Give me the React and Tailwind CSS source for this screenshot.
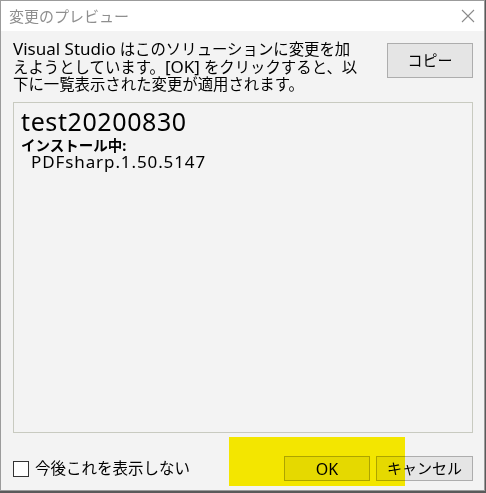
import React from "react";

const jp = { fontFamily: '"Noto Sans", "Noto Sans CJK JP", sans-serif' };

function L({ children }) {
  return <span className="text-[17px]">{children}</span>;
}

export default function App() {
  return (
    <div className="relative w-[486px] h-[493px] bg-[#5a5a5a] overflow-hidden" style={jp}>
      <div className="w-[485px] h-[491px] border border-[#9b9b9b] bg-[#f3f3f3] flex flex-col">
        {/* title bar */}
        <div className="h-[30px] bg-white flex items-center justify-between pl-[8px] pr-[8px] shrink-0">
          <span className="text-[15px] text-[#8f8f8f] leading-none">変更のプレビュー</span>
          <svg width="14" height="14" viewBox="0 0 14 14" className="mr-[1px]">
            <path d="M1 1 L13 13 M13 1 L1 13" stroke="#8a8a8a" strokeWidth="1.1" />
          </svg>
        </div>
        {/* description + copy */}
        <div className="flex justify-between pl-[12px] pr-[11px] pt-[9px] h-[71px] shrink-0">
          <p className="text-[15.4px] leading-[17px] text-black">
            <L>Visual Studio</L> はこのソリューションに変更を加
            <br />
            えようとしています。<L>[OK]</L> をクリックすると、以
            <br />
            下に一覧表示された変更が適用されます。
          </p>
          <button className="w-[86px] h-[35px] mt-[3px] border border-[#adadad] bg-[#e5e5e5] text-[15px] text-black leading-none">
            コピー
          </button>
        </div>
        {/* preview box */}
        <div className="mx-[12px] w-[460px] h-[331px] border border-[#c8cac0] bg-[#f3f3f3] pl-[7px] pt-[2px] shrink-0">
          <div className="text-[25px] leading-[32px] tracking-[0.6px] text-black">test20200830</div>
          <div className="text-[14.5px] leading-[16px] font-bold text-black">インストール中:</div>
          <div className="text-[17px] leading-[18px] tracking-[0.9px] text-black pl-[10px]">PDFsharp.1.50.5147</div>
        </div>
        {/* bottom row */}
        <div className="flex items-center justify-between pl-[12px] pr-[11px] mt-[23px]">
          <label className="flex items-center gap-[6px]">
            <span className="w-[16px] h-[16px] border border-[#333] bg-white" />
            <span className="text-[15.5px] text-black leading-none">今後これを表示しない</span>
          </label>
          <div className="flex gap-[6px]">
            <button className="w-[86px] h-[25px] border border-[#adadad] bg-[#e5e5e5] text-[16px] text-black leading-none">
              OK
            </button>
            <button className="w-[97px] h-[25px] border border-[#adadad] bg-[#e5e5e5] text-[15px] text-black leading-none">
              キャンセル
            </button>
          </div>
        </div>
      </div>
      {/* highlighter */}
      <div className="absolute left-[229px] top-[437px] w-[176px] h-[49px] bg-[#fff200] mix-blend-multiply" />
    </div>
  );
}
